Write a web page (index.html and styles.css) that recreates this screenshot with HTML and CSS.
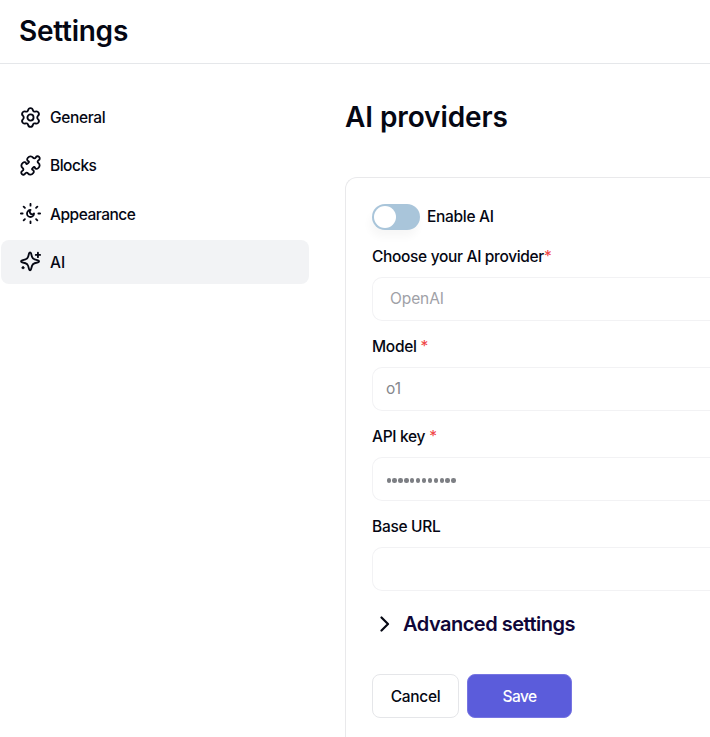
FILE: index.html
```html
<!DOCTYPE html>
<html lang="en">
<head>
<meta charset="utf-8">
<title>Settings</title>
<link rel="stylesheet" href="styles.css">
</head>
<body>
<header class="topbar"><h1 class="title">Settings</h1></header>
<div class="layout">
  <nav class="sidebar">
    <a class="item"><svg class="icon" viewBox="0 0 24 24"><path d="M12 1.200c1.800 0 2.500 1.100 2.800 2.500.3 1.300 1.400 1.900 2.600 1.500 1.500-.5 2.900-.3 3.800 1.200.9 1.600.5 2.700-.7 3.700-1 .9-1 2.900 0 3.800 1.200 1 1.600 2.100.7 3.700-.9 1.500-2.300 1.700-3.800 1.200-1.200-.4-2.300.2-2.600 1.500-.3 1.400-1 2.500-2.800 2.500s-2.500-1.100-2.800-2.500c-.3-1.300-1.400-1.900-2.600-1.500-1.500.5-2.900.3-3.800-1.200-.9-1.600-.5-2.700.7-3.700 1-.9 1-2.900 0-3.800-1.200-1-1.600-2.100-.7-3.700.9-1.500 2.300-1.700 3.800-1.200 1.200.4 2.300-.2 2.600-1.500.3-1.400 1-2.500 2.800-2.500z"/><circle cx="12" cy="12" r="3.500"/></svg><span class="t-general">General</span></a>
    <a class="item"><svg class="icon" viewBox="0 0 24 24"><path d="M21.800 2.200C20.500.9 18.800 1.300 18 2.800 17.200 4.200 15.800 4.200 14.900 3 13.300.9 10.600 1.200 9 3.200 7.500 5 8.200 6.500 9.500 7 10.600 7.400 10.600 8 9.300 9.300 8 10.600 7.400 10.600 7 9.500 6.500 8.200 5 7.500 3.200 9 1.200 10.600.9 13.300 3 14.900 4.200 15.800 4.200 17.200 2.800 18 1.300 18.800.9 20.500 2.200 21.800 3.500 23.100 5.200 22.700 6 21.200 6.800 19.800 8.200 19.800 9.100 21 10.700 23.100 13.400 22.800 15 20.800 16.500 19 15.800 17.500 14.500 17 13.400 16.600 13.400 16 14.700 14.700 16 13.400 16.600 13.400 17 14.500 17.500 15.800 19 16.500 20.800 15 22.800 13.400 23.100 10.700 21 9.100 19.800 8.200 19.800 6.800 21.200 6 22.700 5.200 23.100 3.500 21.800 2.200z"/></svg><span class="t-blocks">Blocks</span></a>
    <a class="item"><svg class="icon" viewBox="0 0 24 24"><path d="M12 1v2M12 21v2M1 12h2M21 12h2M4.200 4.200l1.400 1.400M18.400 18.400l1.400 1.400M4.200 19.800l1.400-1.400M18.400 5.600l1.400-1.400M12 8a2.800 2.800 0 1 0 4 4 4 4 0 1 1-4-4"/></svg><span class="t-appearance">Appearance</span></a>
    <a class="item active"><svg class="icon" viewBox="0 0 24 24"><path d="M11.500 1.500c.7 0 .9.500 1.100 1.200l1.100 3.900c.5 1.700 1.300 2.500 3 3l3.900 1.100c.7.200 1.200.4 1.200 1.100s-.5.900-1.200 1.100l-3.900 1.100c-1.700.5-2.500 1.300-3 3l-1.100 3.900c-.2.700-.4 1.200-1.100 1.200s-.9-.5-1.100-1.200l-1.100-3.900c-.5-1.700-1.300-2.500-3-3l-3.900-1.100c-.7-.2-1.200-.4-1.200-1.100s.5-.9 1.200-1.100l3.900-1.100c1.700-.5 2.500-1.300 3-3l1.100-3.900c.2-.7.400-1.200 1.100-1.200zM20.500 2v5M18 4.500h5M3.500 18.200v1.600M2.700 19h1.600"/></svg><span>AI</span></a>
  </nav>
  <main class="content">
    <h2 class="heading">AI providers</h2>
    <section class="card">
      <div class="toggle-row"><span class="toggle"><span class="knob"></span></span><span class="t-enable">Enable AI</span></div>
      <div class="field"><label class="label"><span class="t-choose">Choose your AI provider</span><b class="req tight">*</b></label><div class="input select"><span>OpenAI</span></div></div>
      <div class="field"><label class="label"><span class="t-model">Model</span><b class="req">*</b></label><div class="input">o1</div></div>
      <div class="field"><label class="label"><span class="t-api">API key</span><b class="req">*</b></label><div class="input dots"><i></i><i></i><i></i><i></i><i></i><i></i><i></i><i></i><i></i><i></i><i></i><i></i></div></div>
      <div class="field"><label class="label"><span class="t-base">Base URL</span></label><div class="input"></div></div>
      <div class="advanced"><svg class="chevron" viewBox="0 0 10 16"><path d="M1.500 1.500L8 8l-6.500 6.500"/></svg><span>Advanced settings</span></div>
      <div class="actions"><button class="btn cancel">Cancel</button><button class="btn save">Save</button></div>
    </section>
  </main>
</div>
</body>
</html>
```
FILE: styles.css
```css
* { box-sizing: border-box; }
body { margin: 0; height: 737px; background: #fff; color: #050713; font: 500 15.500px/22px Inter, "Liberation Sans", sans-serif; }
h1, h2 { margin: 0; font-weight: 600; white-space: nowrap; }
.topbar { height: 64px; padding: 11px 19px 0; border-bottom: 1px solid #e5e7ea; }
.title { font-size: 28px; line-height: 40px; letter-spacing: -.25px; }
.layout { display: flex; height: 673px; }
.sidebar { width: 345px; flex: none; padding: 31px 36px 0 1px; display: flex; flex-direction: column; gap: 4.300px; }
.item { height: 44px; flex: none; display: flex; align-items: center; gap: 9px; padding-left: 19px; border-radius: 8px; }
.item span { padding-top: 2px; }
.active { background: #f2f3f5; }
.icon { width: 21px; height: 21px; fill: none; stroke: currentColor; stroke-width: 2.100; stroke-linecap: round; stroke-linejoin: round; }
.t-general { letter-spacing: -.35px; }
.t-blocks { letter-spacing: -.5px; }
.t-appearance { letter-spacing: -.5px; }
.t-enable, .t-model, .t-api, .t-base { letter-spacing: -.3px; }
.t-choose { letter-spacing: -.33px; }
.content { flex: 1; min-width: 0; padding-top: 33px; display: flex; flex-direction: column; }
.heading { font-size: 28px; line-height: 40px; letter-spacing: -.1px; }
.card { flex: 1; margin-top: 40px; padding: 25px 0 0 26px; border: 1px solid #e9e9eb; border-width: 1px 0 0 1px; border-radius: 12px 0 0; }
.toggle-row { display: flex; align-items: center; height: 27px; gap: 7px; }
.toggle { width: 48px; height: 26px; padding: 2px; border-radius: 13px; background: #a9c5da; box-shadow: -2px 7px 9px #00000009; }
.knob { display: block; width: 22px; height: 22px; border-radius: 50%; background: #fff; }
.field { margin-top: 14px; height: 76px; }
.label { display: flex; height: 23px; padding-top: 1.500px; margin-bottom: 10px; white-space: nowrap; }
.req { color: #f04444; font-weight: 400; margin-left: 4px; }
.tight { margin-left: 0; }
.input { height: 44px; display: flex; align-items: center; padding-left: 13px; border: 1px solid #f2f2f4; border-right: 0; border-radius: 10px 0 0 10px; color: #85878c; font-weight: 400; }
.select { padding-left: 17px; color: #a0a1a7; letter-spacing: -.1px; }
.dots { gap: 1.500px; padding: 3px 0 0 13.500px; }
.dots i { width: 4.400px; height: 4.400px; border-radius: 50%; background: #7d7f84; }
.advanced { display: flex; align-items: center; height: 28px; margin: 20px 0 0 8px; gap: 13px; color: #0f0638; font-size: 20px; font-weight: 600; letter-spacing: -.5px; white-space: nowrap; }
.chevron { width: 10px; height: 16px; fill: none; stroke: #050713; stroke-width: 2.200; stroke-linecap: round; stroke-linejoin: round; }
.actions { display: flex; gap: 8px; margin-top: 36px; }
.btn { height: 44px; padding: 2px 0 0; border-radius: 8px; font: inherit; }
.cancel { width: 87px; border: 1px solid #e5e6e9; background: #fff; color: inherit; letter-spacing: -.3px; }
.save { width: 105px; border: 1px solid #7775e2; background: #5b5cdb; color: #fff; letter-spacing: -.6px; }
```
